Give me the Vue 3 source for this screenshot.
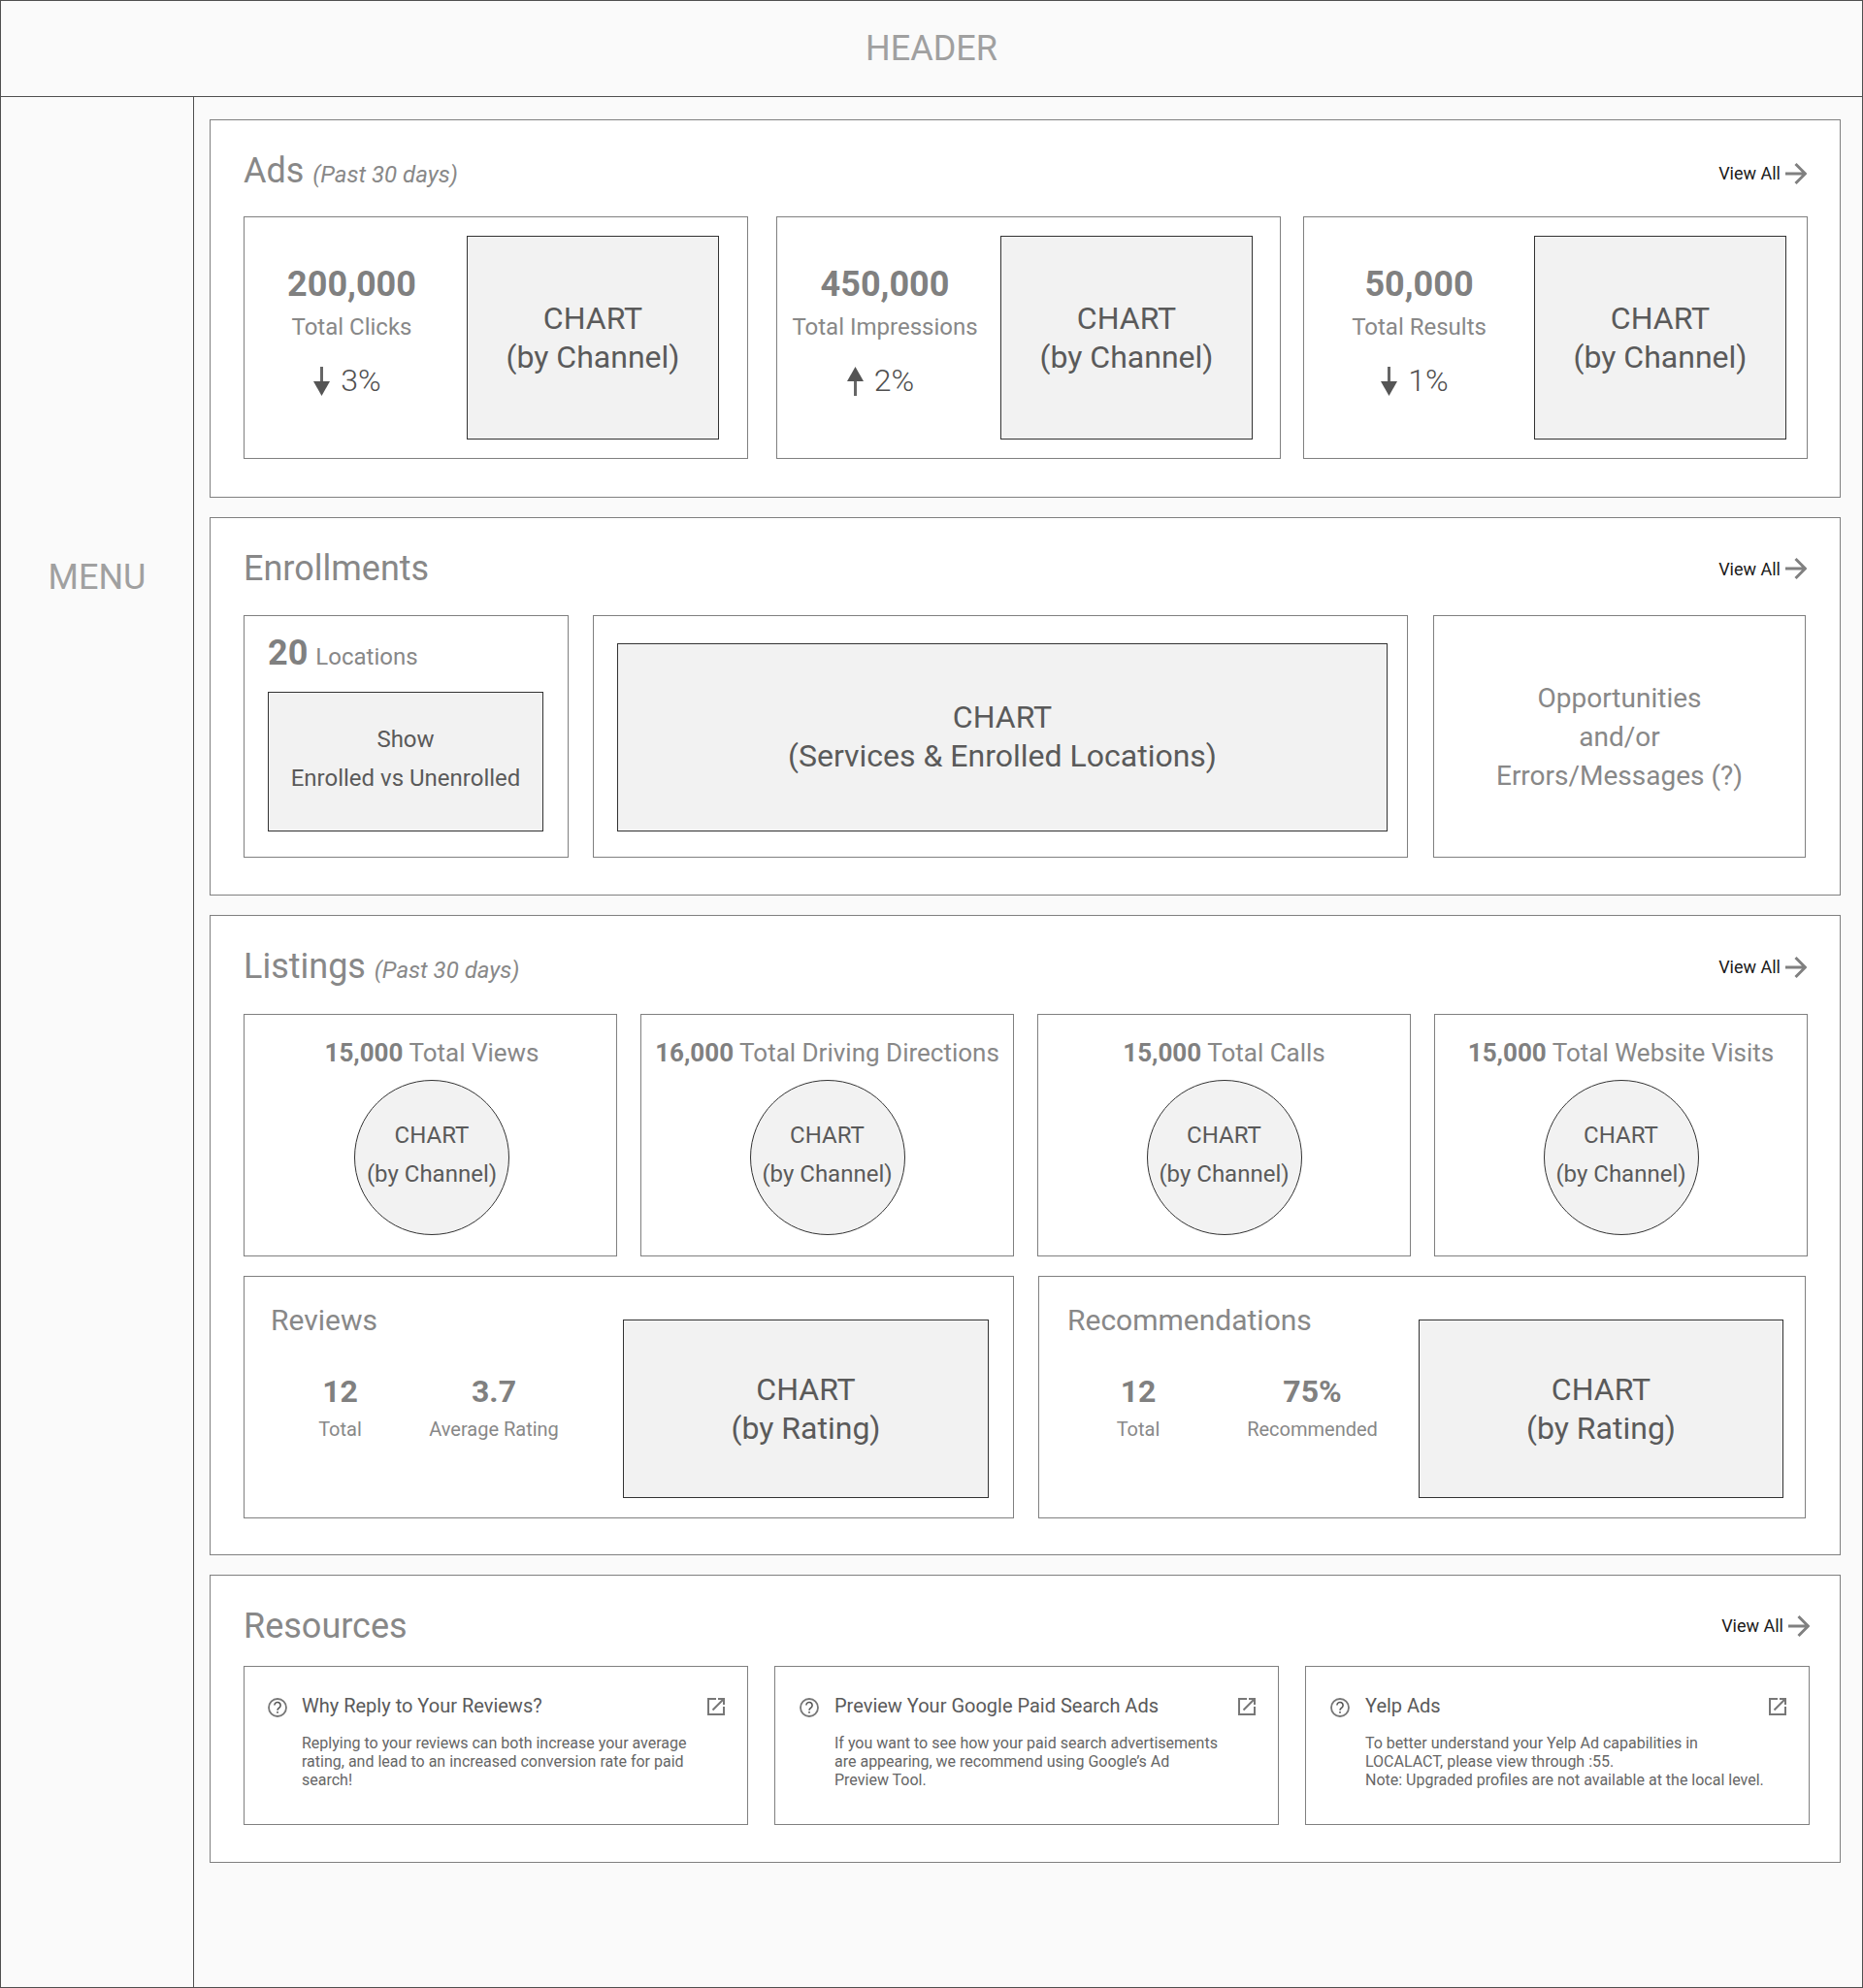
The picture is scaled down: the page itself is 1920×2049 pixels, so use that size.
<script setup>
const adCards = [
  { value: '200,000', label: 'Total Clicks', dir: 'down', pct: '3%', cls: 'ad-a' },
  { value: '450,000', label: 'Total Impressions', dir: 'up', pct: '2%', cls: 'ad-b' },
  { value: '50,000', label: 'Total Results', dir: 'down', pct: '1%', cls: 'ad-c' }
]
const listCards = [
  { value: '15,000', label: 'Total Views', cls: 'li-a' },
  { value: '16,000', label: 'Total Driving Directions', cls: 'li-b' },
  { value: '15,000', label: 'Total Calls', cls: 'li-c' },
  { value: '15,000', label: 'Total Website Visits', cls: 'li-d' }
]
const resources = [
  { title: 'Why Reply to Your Reviews?', lines: ['Replying to your reviews can both increase your average', 'rating, and lead to an increased conversion rate for paid', 'search!'], cls: 're-a' },
  { title: 'Preview Your Google Paid Search Ads', lines: ['If you want to see how your paid search advertisements', 'are appearing, we recommend using Google\u2019s Ad', 'Preview Tool.'], cls: 're-b' },
  { title: 'Yelp Ads', lines: ['To better understand your Yelp Ad capabilities in', 'LOCALACT, please view through :55.', 'Note: Upgraded profiles are not available at the local level.'], cls: 're-c' }
]
</script>

<template>
  <div class="page">
    <header class="top">HEADER</header>
    <div class="body">
      <aside class="menu">MENU</aside>
      <main class="main">
        <section class="panel panel-ads">
          <div class="head">
            <h2>Ads <em>(Past 30 days)</em></h2>
            <a class="view">View All
              <svg width="22" height="24" viewBox="0 0 22 24"><path d="M0 12H20M10.5 2L20.5 12L10.5 22" fill="none" stroke="#808080" stroke-width="3"/></svg>
            </a>
          </div>
          <div class="row">
            <div v-for="c in adCards" :key="c.label" class="card ad" :class="c.cls">
              <div class="stat">
                <div class="big">{{ c.value }}</div>
                <div class="lab">{{ c.label }}</div>
                <div class="delta">
                  <svg width="17" height="30" viewBox="0 0 17 30" :class="{ flip: c.dir === 'up' }">
                    <path d="M8.5 0V18" stroke="#666" stroke-width="3"/>
                    <path d="M0 15H17L8.5 30Z" fill="#555"/>
                  </svg>
                  <span>{{ c.pct }}</span>
                </div>
              </div>
              <div class="chart"><span>CHART</span><span>(by Channel)</span></div>
            </div>
          </div>
        </section>

        <section class="panel panel-enr">
          <div class="head">
            <h2>Enrollments</h2>
            <a class="view">View All
              <svg width="22" height="24" viewBox="0 0 22 24"><path d="M0 12H20M10.5 2L20.5 12L10.5 22" fill="none" stroke="#808080" stroke-width="3"/></svg>
            </a>
          </div>
          <div class="row">
            <div class="card loc">
              <div class="loc-head"><b>20</b> Locations</div>
              <div class="chart small"><span>Show</span><span>Enrolled vs Unenrolled</span></div>
            </div>
            <div class="card serv">
              <div class="chart"><span>CHART</span><span>(Services &amp; Enrolled Locations)</span></div>
            </div>
            <div class="card opp"><span>Opportunities</span><span>and/or</span><span>Errors/Messages (?)</span></div>
          </div>
        </section>

        <section class="panel panel-list">
          <div class="head">
            <h2>Listings <em>(Past 30 days)</em></h2>
            <a class="view">View All
              <svg width="22" height="24" viewBox="0 0 22 24"><path d="M0 12H20M10.5 2L20.5 12L10.5 22" fill="none" stroke="#808080" stroke-width="3"/></svg>
            </a>
          </div>
          <div class="row">
            <div v-for="c in listCards" :key="c.label" class="card li" :class="c.cls">
              <div class="li-title"><b>{{ c.value }}</b> {{ c.label }}</div>
              <div class="circle"><span>CHART</span><span>(by Channel)</span></div>
            </div>
          </div>
          <div class="row row2">
            <div class="card rev rev-a">
              <div class="rev-left">
                <div class="rev-title">Reviews</div>
                <div class="rev-stats">
                  <div class="rs rs-a"><b>12</b><span>Total</span></div>
                  <div class="rs rs-b"><b>3.7</b><span>Average Rating</span></div>
                </div>
              </div>
              <div class="chart"><span>CHART</span><span>(by Rating)</span></div>
            </div>
            <div class="card rev rev-b">
              <div class="rev-left">
                <div class="rev-title">Recommendations</div>
                <div class="rev-stats">
                  <div class="rs rs-c"><b>12</b><span>Total</span></div>
                  <div class="rs rs-d"><b>75%</b><span>Recommended</span></div>
                </div>
              </div>
              <div class="chart"><span>CHART</span><span>(by Rating)</span></div>
            </div>
          </div>
        </section>

        <section class="panel panel-res">
          <div class="head">
            <h2>Resources</h2>
            <a class="view">View All
              <svg width="22" height="24" viewBox="0 0 22 24"><path d="M0 12H20M10.5 2L20.5 12L10.5 22" fill="none" stroke="#808080" stroke-width="3"/></svg>
            </a>
          </div>
          <div class="row">
            <div v-for="r in resources" :key="r.title" class="card res" :class="r.cls">
              <svg class="q" width="20" height="20" viewBox="0 0 20 20">
                <circle cx="10" cy="10" r="9" fill="none" stroke="#777" stroke-width="1.8"/>
                <path d="M6.9 7.6a3.1 3.1 0 1 1 4.9 2.5c-1.1.8-1.8 1.3-1.8 2.7" fill="none" stroke="#555" stroke-width="1.6"/>
                <rect x="9.2" y="14" width="1.6" height="1.7" fill="#555"/>
              </svg>
              <div class="res-body">
                <div class="res-title">{{ r.title }}</div>
                <p><span v-for="l in r.lines" :key="l">{{ l }}</span></p>
              </div>
              <svg class="ext" width="18" height="18" viewBox="0 0 18 18">
                <path d="M9 1H1V17H17V9" fill="none" stroke="#777" stroke-width="2"/>
                <path d="M5.5 12.5L16.2 1.8M11 1H17V7" fill="none" stroke="#777" stroke-width="2"/>
              </svg>
            </div>
          </div>
        </section>
      </main>
    </div>
  </div>
</template>

<style>
html, body { margin: 0; background: #fafafa; }
</style>

<style scoped>
* { box-sizing: border-box; }
.page {
  width: 1920px; height: 2049px; background: #fafafa; border: 1px solid #4f4f4f;
  font-family: Roboto, "Liberation Sans", sans-serif; font-weight: 400; color: #888;
  display: flex; flex-direction: column;
}
.top {
  height: 99px; border-bottom: 1px solid #4f4f4f; display: flex; align-items: center; justify-content: center;
  font-size: 36px; color: #a0a0a0; font-weight: 400;
}
.body { flex: 1; display: flex; }
.menu {
  width: 199px; border-right: 1px solid #4f4f4f; font-size: 36px; color: #a0a0a0; font-weight: 400;
  text-align: center; padding-top: 474px; line-height: 42px;
}
.main { flex: 1; padding: 23px 0 0 16px; }
.panel {
  width: 1681px; background: #fff; border: 1px solid #808080; padding: 0 0 0 34px; margin-bottom: 20px;
}
.panel-ads { height: 390px; }
.panel-enr { height: 390px; }
.panel-list { height: 660px; }
.panel-res { height: 297px; }
.head { display: flex; justify-content: space-between; align-items: center; width: 1611px; height: 99px; }
.panel-ads .head { padding-top: 8px; }
.panel-ads .view { margin-top: 2px; }
.panel-enr .head { height: 100px; padding-top: 4px; }
.panel-list .head { height: 101px; padding-top: 6px; }
.panel-list .view { margin-top: -2px; }
.panel-res .head { height: 93px; width: 1614px; padding-top: 10px; }
h2 { margin: 0; font-size: 36px; font-weight: 400; color: #888; line-height: 42px; }
h2 em { font-size: 24px; }
.view { display: flex; align-items: center; gap: 5px; font-size: 18px; color: #1a1a1a; font-weight: 400; }
.row { display: flex; }
.card { background: #fff; border: 1px solid #808080; height: 250px; }
.chart {
  background: #f2f2f2; border: 1px solid #333; color: #5a5a5a; font-size: 32px; line-height: 40px;
  display: flex; flex-direction: column; align-items: center; justify-content: center;
}
.ad { display: flex; padding: 19px 21px 19px 0; }
.ad-a { width: 520px; margin-right: 29px; padding-right: 29px; }
.ad-b { width: 520px; margin-right: 23px; padding-right: 28px; }
.ad-c { width: 520px; padding-right: 21px; }
.stat { flex: 1; display: flex; flex-direction: column; align-items: center; padding-top: 29px; }
.ad-a .stat { padding-right: 8px; }
.ad-b .stat { padding-right: 8px; }
.big { font-size: 36px; font-weight: 700; line-height: 42px; color: #808080; }
.lab { font-size: 24px; line-height: 28px; margin-top: 9px; color: #888; }
.delta { display: flex; align-items: center; gap: 11px; margin-top: 24px; margin-right: 9px; font-size: 32px; font-weight: 300; color: #4f4f4f; line-height: 35px; }
.flip { transform: scaleY(-1); }
.ad .chart { width: 260px; height: 210px; }
.loc { width: 335px; margin-right: 25px; padding: 0 25px 0 24px; }
.loc-head { height: 78px; display: flex; align-items: baseline; gap: 8px; font-size: 24px; padding-top: 17px; color: #888; }
.loc-head b { font-size: 36px; font-weight: 700; color: #808080; }
.chart.small { height: 144px; font-size: 24px; line-height: 40px; padding-bottom: 6px; }
.serv { width: 840px; margin-right: 26px; padding: 28px 20px 0 24px; }
.serv .chart { height: 194px; padding-bottom: 2px; }
.opp { width: 384px; font-size: 28px; line-height: 40px; display: flex; flex-direction: column; align-items: center; justify-content: center; color: #888; padding-top: 2px; }
.li { padding-top: 19px; display: flex; flex-direction: column; align-items: center; }
.li-a { width: 385px; margin-right: 24px; padding-left: 3px; }
.li-b { width: 385px; margin-right: 24px; }
.li-c { width: 385px; margin-right: 24px; }
.li-d { width: 385px; }
.li-title { font-size: 26px; line-height: 40px; color: #888; white-space: nowrap; }
.li-title b { font-weight: 700; color: #808080; }
.circle {
  width: 160px; height: 160px; margin-top: 8px; border-radius: 50%; background: #f2f2f2; border: 1px solid #333;
  display: flex; flex-direction: column; align-items: center; justify-content: center; color: #5a5a5a;
  font-size: 24px; line-height: 40px; padding-bottom: 6px;
}
.row2 { margin-top: 20px; }
.rev { display: flex; justify-content: space-between; padding: 27px 25px 0 27px; }
.rev-a { width: 794px; margin-right: 25px; }
.rev-b { width: 791px; padding-left: 29px; padding-right: 22px; }
.rev-left { flex: 1; }
.rev-title { font-size: 30px; line-height: 35px; color: #888; }
.rev-stats { display: flex; }
.rs { display: flex; flex-direction: column; align-items: center; }
.rs b { font-size: 32px; font-weight: 700; line-height: 38px; margin-top: 37px; color: #808080; }
.rs span { font-size: 20px; line-height: 24px; margin-top: 8px; color: #888; }
.rs-a { width: 143px; }
.rs-b { width: 174px; }
.rs-c { width: 146px; }
.rs-d { width: 213px; }
.rev .chart { width: 377px; height: 184px; margin-top: 17px; font-size: 32px; }
.rev-b .chart { width: 376px; }
.res { height: 164px; display: flex; padding: 32px 23px 0 24px; }
.re-a { width: 520px; margin-right: 27px; }
.re-b { width: 520px; margin-right: 27px; padding-left: 25px; }
.re-b .q { margin-right: 16px; }
.re-c { width: 520px; padding-left: 25px; }
.re-c .q { margin-right: 16px; }
.q { flex: none; margin-right: 15px; }
.res-body { flex: 1; color: #5a5a5a; }
.res-title { font-size: 20px; line-height: 20px; margin-top: -2px; }
p { margin: 19px 0 0; font-size: 16px; line-height: 19px; color: #666; }
p span { display: block; white-space: nowrap; }
.ext { flex: none; }
</style>
